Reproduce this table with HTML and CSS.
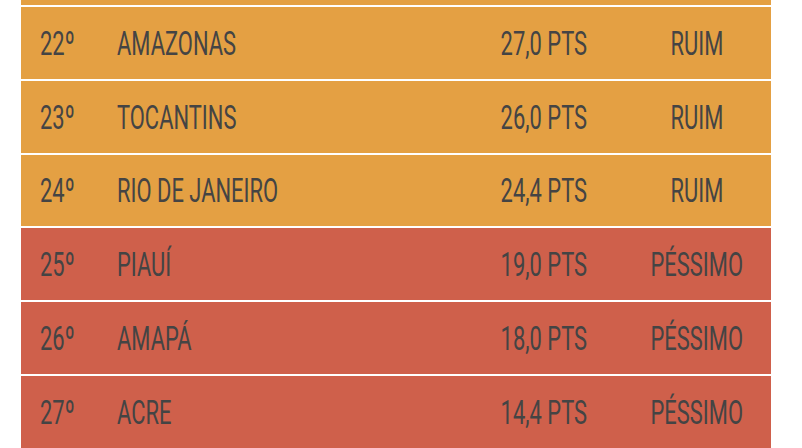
FILE: index.html
```html
<!DOCTYPE html>
<html lang="pt-BR">
<head>
    <meta charset="UTF-8">
    <meta name="viewport" content="width=device-width, initial-scale=1.0">
    <title>Ranking dos Estados</title>
    <link rel="stylesheet" href="styles.css">
</head>
<body>
    <div class="ranking">
        <!-- fim da linha anterior -->
        <div class="row-end ruim"></div>
        <div class="row ruim">
            <span class="cell rank"><span class="txt">22º</span></span>
            <span class="cell name"><span class="txt">AMAZONAS</span></span>
            <span class="cell pts"><span class="txt">27,0 PTS</span></span>
            <span class="cell status"><span class="txt">RUIM</span></span>
        </div>
        <div class="row ruim">
            <span class="cell rank"><span class="txt">23º</span></span>
            <span class="cell name"><span class="txt">TOCANTINS</span></span>
            <span class="cell pts"><span class="txt">26,0 PTS</span></span>
            <span class="cell status"><span class="txt">RUIM</span></span>
        </div>
        <div class="row ruim">
            <span class="cell rank"><span class="txt">24º</span></span>
            <span class="cell name"><span class="txt">RIO DE JANEIRO</span></span>
            <span class="cell pts"><span class="txt">24,4 PTS</span></span>
            <span class="cell status"><span class="txt">RUIM</span></span>
        </div>
        <div class="row pessimo">
            <span class="cell rank"><span class="txt">25º</span></span>
            <span class="cell name"><span class="txt">PIAUÍ</span></span>
            <span class="cell pts"><span class="txt">19,0 PTS</span></span>
            <span class="cell status"><span class="txt">PÉSSIMO</span></span>
        </div>
        <div class="row pessimo">
            <span class="cell rank"><span class="txt">26º</span></span>
            <span class="cell name"><span class="txt">AMAPÁ</span></span>
            <span class="cell pts"><span class="txt">18,0 PTS</span></span>
            <span class="cell status"><span class="txt">PÉSSIMO</span></span>
        </div>
        <div class="row pessimo">
            <span class="cell rank"><span class="txt">27º</span></span>
            <span class="cell name"><span class="txt">ACRE</span></span>
            <span class="cell pts"><span class="txt">14,4 PTS</span></span>
            <span class="cell status"><span class="txt">PÉSSIMO</span></span>
        </div>
    </div>
</body>
</html>
```

FILE: styles.css
```css
body {
    margin: 0;
    background-color: #fff;
    font-family: Roboto, "Liberation Sans", sans-serif;
    color: #444;
}
.ranking {
    display: flex;
    flex-direction: column;
    gap: 2px;
    width: 750px;
    margin-left: 21px;
}
.row-end {
    height: 5px;
}
.row {
    display: grid;
    grid-template-columns: 77px 1fr 120px 149px;
    align-items: center;
    height: 71.8px;
    padding-left: 19px;
    font-size: 34px;
    font-weight: 400;
    line-height: 1;
}
.ruim {
    background-color: #e4a043;
}
.pessimo {
    background-color: #cf604b;
}
.cell {
    display: flex;
    min-width: 0;
}
.txt {
    display: inline-block;
    transform: scaleX(0.645);
    white-space: nowrap;
}
.rank .txt,
.name .txt {
    transform-origin: left center;
}
.pts {
    justify-content: flex-end;
    padding-right: 35px;
}
.pts .txt {
    transform-origin: right center;
}
.status {
    justify-content: center;
}
.status .txt {
    transform-origin: center;
}
```
